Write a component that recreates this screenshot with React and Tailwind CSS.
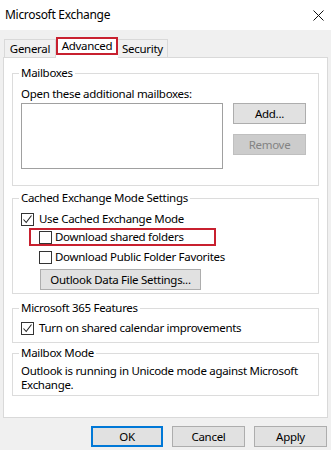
import React from 'react';

const font = "font-['Segoe_UI','Noto_Sans',sans-serif]";

function Check({ checked }) {
  return (
    <span className="flex h-[13px] w-[13px] shrink-0 items-center justify-center border border-[#333333] bg-white">
      {checked && (
        <svg width="11" height="11" viewBox="0 0 11 11">
          <polyline points="1.5,5.5 4.2,8.5 9.5,1.5" fill="none" stroke="#222222" strokeWidth="1.1" />
        </svg>
      )}
    </span>
  );
}

function Btn({ children, className = '', disabled, primary }) {
  return (
    <button
      className={`flex h-[21px] items-center justify-center leading-none ${
        disabled
          ? 'border border-[#bfbfbf] bg-[#cccccc] text-[#838383]'
          : primary
          ? 'border-2 border-[#0078d7] bg-[#e1e1e1] text-black'
          : 'border border-[#adadad] bg-[#e1e1e1] text-black'
      } ${className}`}
    >
      {children}
    </button>
  );
}

function Group({ title, className = '', children }) {
  return (
    <fieldset className={`border border-[#dcdcdc] px-[8px] ${className}`}>
      <legend className="ml-[-2px] px-[2px] leading-[16px]">{title}</legend>
      {children}
    </fieldset>
  );
}

export default function App() {
  return (
    <div className={`${font} h-[450px] w-[331px] overflow-hidden bg-[#f0f0f0] text-[11.5px] tracking-[-0.3px] text-black`}>
      {/* title bar */}
      <div className="flex h-[30px] items-center justify-between bg-white pl-[5px] pr-[7px]">
        <span className="text-[12px]">Microsoft Exchange</span>
        <svg width="11" height="11" viewBox="0 0 11 11">
          <path d="M0.5 0.5 L10.5 10.5 M10.5 0.5 L0.5 10.5" stroke="#111111" strokeWidth="1" />
        </svg>
      </div>

      <div className="px-[3px] pt-[7px]">
        {/* tabs */}
        <div className="flex h-[20px] items-end pl-[1px]">
          <div className="flex h-[18px] w-[52px] items-center justify-center border border-b-0 border-[#d9d9d9] bg-[#f0f0f0]">
            General
          </div>
          <div className="relative z-10 mb-[-1px] h-[21px] w-[62px] bg-white">
            <div className="flex h-[18px] items-center justify-center border-2 border-[#c8202f]">Advanced</div>
          </div>
          <div className="flex h-[18px] w-[50px] items-center justify-center border border-b-0 border-l-0 border-[#d9d9d9] bg-[#f0f0f0]">
            Security
          </div>
        </div>

        {/* panel */}
        <div className="border border-[#d9d9d9] bg-white px-[8px] pb-[21px] pt-[7px]">
          <Group title="Mailboxes" className="pb-[16px]">
            <div className="mt-[5px] leading-[16px]">Open these additional mailboxes:</div>
            <div className="mt-[1px] flex gap-[10px]">
              <div className="h-[66px] w-[202px] border border-[#a0a0a0] bg-white" />
              <div className="flex flex-col gap-[10px]">
                <Btn className="w-[73px]">Add...</Btn>
                <Btn className="w-[73px]" disabled>Remove</Btn>
              </div>
            </div>
          </Group>

          <Group title="Cached Exchange Mode Settings" className="mt-[4px] pb-[3px]">
            <div className="mt-[5px] flex h-[16px] items-center gap-[5px]">
              <Check checked />
              <span>Use Cached Exchange Mode</span>
            </div>
            <div className="ml-[8px] mt-[1px] flex h-[18px] w-[187px] items-center gap-[3px] border-2 border-[#c8202f] pl-[8px]">
              <Check />
              <span>Download shared folders</span>
            </div>
            <div className="ml-[18px] mt-[3px] flex h-[16px] items-center gap-[3px]">
              <Check />
              <span>Download Public Folder Favorites</span>
            </div>
            <Btn className="ml-[19px] mt-[4px] w-[161px]">Outlook Data File Settings...</Btn>
          </Group>

          <Group title="Microsoft 365 Features" className="mt-[6px] pb-[6px]">
            <div className="mt-[4px] flex h-[16px] items-center gap-[5px]">
              <Check checked />
              <span>Turn on shared calendar improvements</span>
            </div>
          </Group>

          <Group title="Mailbox Mode" className="mt-[2px] pb-[3px]">
            <p className="mt-[3px] leading-[14px]">
              Outlook is running in Unicode mode against Microsoft Exchange.
            </p>
          </Group>
        </div>

        {/* footer buttons */}
        <div className="mt-[8px] flex justify-end gap-[9px] pr-[1px]">
          <Btn primary className="w-[72px]">OK</Btn>
          <Btn className="w-[73px]">Cancel</Btn>
          <Btn className="w-[73px]">Apply</Btn>
        </div>
      </div>
    </div>
  );
}
